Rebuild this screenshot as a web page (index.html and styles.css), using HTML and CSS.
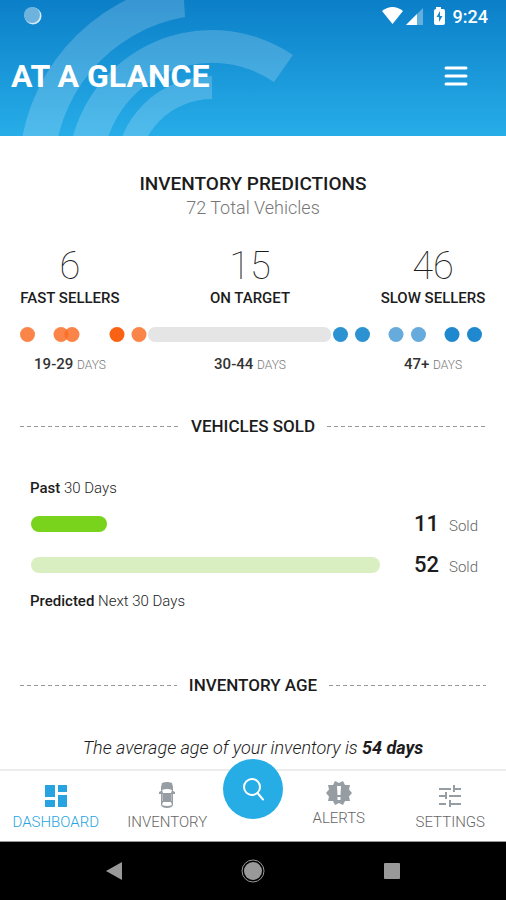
FILE: index.html
```html
<!DOCTYPE html>
<html lang="en">
<head>
<meta charset="utf-8">
<meta name="viewport" content="width=device-width, initial-scale=1">
<title>At a Glance</title>
<link rel="stylesheet" href="styles.css">
</head>
<body>
<header class="header">
  <svg class="header-art" viewBox="0 0 320 136" width="320" height="136" aria-hidden="true">
    <g fill="#fff" fill-opacity=".19">
      <path d="M19 173A193 193 0 0 1 183 -18L185 17A158 158 0 0 0 54 173Z"/>
      <path d="M68 173A144 144 0 0 1 293 55L274 82A110 110 0 0 0 102 173Z"/>
      <path d="M115 173A97 97 0 0 1 212 76V99A74 74 0 0 0 138 173Z"/>
    </g>
  </svg>
  <div class="status">
    <svg viewBox="0 0 18 18" width="18" height="18" aria-hidden="true"><circle cx="9" cy="9" r="8.500" fill="#d5ecf8"/><circle cx="8" cy="8" r="8" fill="#6db3de"/></svg>
    <div class="status-right">
      <svg viewBox="0 0 68 20" width="68" height="20" aria-hidden="true">
        <path d="M1 5Q11.500 -3 22 5L11.500 18Z" fill="#fff"/>
        <path d="M42 2V19H25Z" fill="#fff" fill-opacity=".35"/><path d="M36 8V19H25Z" fill="#fff"/>
        <path d="M55 1h5v2h2q2 0 2 2v12q0 2-2 2h-7q-2 0-2-2V5q0-2 2-2Z" fill="#fff"/><path d="M59 5L55.500 11H58V16L61.500 10H59Z" fill="#1888cb"/>
      </svg>
      <span>9:24</span>
    </div>
  </div>
  <div class="title-row">
    <h1>AT A GLANCE</h1>
    <button class="menu" type="button" aria-label="Menu"><svg viewBox="0 0 24 20" width="24" height="20"><path d="M2 2H22M2 10H22M2 18H22" stroke="#fff" stroke-width="3" stroke-linecap="round"/></svg></button>
  </div>
</header>

<main>
  <section class="predictions">
    <h2>INVENTORY PREDICTIONS</h2>
    <p class="total">72 Total Vehicles</p>
    <div class="groups">
      <div><div class="count">6</div><div class="group-name">FAST SELLERS</div></div>
      <div><div class="count">15</div><div class="group-name">ON TARGET</div></div>
      <div><div class="count">46</div><div class="group-name">SLOW SELLERS</div></div>
    </div>
    <svg class="track" viewBox="0 0 466 16" aria-hidden="true">
      <rect x="128" y="0" width="183" height="15" rx="7" fill="#e5e5e5"/>
      <g fill="#fa6a21" fill-opacity=".82"><circle cx="7.500" cy="7.500" r="7.500"/><circle cx="41" cy="7.500" r="7.500"/><circle cx="52" cy="7.500" r="7.500"/><circle cx="119" cy="7.500" r="7.500"/></g>
      <circle cx="97" cy="7.500" r="7.500" fill="#f96113"/>
      <g fill="#2d92d2"><circle cx="320.500" cy="7.500" r="7.500"/><circle cx="342.500" cy="7.500" r="7.500"/></g>
      <g fill="#66abdc"><circle cx="376" cy="7.500" r="7.500"/><circle cx="398.500" cy="7.500" r="7.500"/></g>
      <g fill="#2088ce"><circle cx="432" cy="7.500" r="7.500"/><circle cx="454.500" cy="7.500" r="7.500"/></g>
    </svg>
    <div class="groups ranges">
      <div><b>19-29</b> <span>DAYS</span></div>
      <div><b>30-44</b> <span>DAYS</span></div>
      <div><b>47+</b> <span>DAYS</span></div>
    </div>
  </section>

  <section class="sold">
    <h2 class="ruled">VEHICLES SOLD</h2>
    <div class="sold-body">
      <p class="caption"><b>Past</b> 30 Days</p>
      <div class="bar-row"><div class="bar-space"><div class="bar past" style="width:21.7%"></div></div><div class="value"><b>11</b><span>Sold</span></div></div>
      <div class="bar-row"><div class="bar-space"><div class="bar next" style="width:100%"></div></div><div class="value"><b>52</b><span>Sold</span></div></div>
      <p class="caption"><b>Predicted</b> Next 30 Days</p>
    </div>
  </section>

  <section class="age">
    <h2 class="ruled">INVENTORY AGE</h2>
    <p class="average">The average age of your inventory is <b>54 days</b></p>
  </section>
</main>

<footer class="bottom">
  <nav class="tabs">
    <a class="tab active" href="#dashboard"><svg viewBox="0 0 24 24" width="24" height="24"><path d="M1 1H11V13H1ZM1 16H11V23H1ZM14 1H23V8H14ZM14 11H23V23H14Z" fill="#27a3e2"/></svg>DASHBOARD</a>
    <a class="tab" href="#inventory"><svg viewBox="0 0 16 26" width="16" height="26"><path d="M3 1Q8 -1 13 1L14 5V9L16 10V12H14V23Q13 26 8 26Q3 26 2 23V12H0V10L2 9V5Z" fill="#969da3"/><path d="M3 8Q8 6 13 8L12 11H4ZM4 20H12L13 23Q8 25 3 23Z" fill="#fff"/><path d="M3.500 12V19M12.500 12V19" stroke="#b9bec2"/></svg>INVENTORY</a>
    <button class="search" type="button" aria-label="Search"><svg viewBox="0 0 26 26" width="26" height="26" fill="none" stroke="#fff" stroke-width="2" stroke-linecap="round"><circle cx="12" cy="11" r="8"/><path d="M17.500 17L23 23.500"/></svg></button>
    <a class="tab raised" href="#alerts"><svg viewBox="0 0 26 26" width="26" height="26"><path d="M9 1L13 3L17 1L19 5L24 5L23 9.500L26 13L23 16.500L24 21L19 21L17 25L13 23L9 25L7 21L2 21L3 16.500L0 13L3 9.500L2 5L7 5Z" fill="#969da3"/><path d="M11 6H15L14.500 15H11.500ZM11.500 17H14.500V20H11.500Z" fill="#fff"/></svg>ALERTS</a>
    <a class="tab" href="#settings"><svg viewBox="0 0 24 24" width="24" height="24"><path d="M1 5H13M16 5H23M16 1V8M1 12H7M8 8V15M11 12H23M1 20H8M11 20H23M12 16V23" fill="none" stroke="#969da3" stroke-width="2"/></svg>SETTINGS</a>
  </nav>
  <div class="system">
    <button type="button" aria-label="Back"><svg viewBox="0 0 24 24" width="24" height="24"><path d="M4 12L20 3V21Z" fill="#999"/></svg></button>
    <button type="button" aria-label="Home"><svg viewBox="0 0 24 24" width="24" height="24"><circle cx="12" cy="12" r="11" fill="none" stroke="#999"/><circle cx="12" cy="12" r="9" fill="#999"/></svg></button>
    <button type="button" aria-label="Recents"><svg viewBox="0 0 24 24" width="24" height="24"><rect x="4" y="4" width="16" height="16" rx="1" fill="#999"/></svg></button>
  </div>
</footer>
</body>
</html>
```
FILE: styles.css
```css
* { box-sizing: border-box; }
body {
  margin: 0;
  min-height: 100vh;
  display: flex;
  flex-direction: column;
  background: #fff;
  color: #1c1c1c;
  font-family: Roboto, "Liberation Sans", sans-serif;
}
h1, h2, p { margin: 0; }
svg { display: block; flex: none; }
button { border: 0; padding: 0; background: none; cursor: pointer; }

.header {
  position: relative;
  height: 136px;
  background: linear-gradient(#0b7fc8, #27ade8);
  color: #fff;
  overflow: hidden;
}
.header-art { position: absolute; left: 0; top: 0; }
.status, .title-row {
  position: relative;
  display: flex;
  align-items: center;
  justify-content: space-between;
}
.status { height: 32px; padding: 0 18px 0 24px; }
.status-right { display: flex; align-items: center; gap: 4px; font-size: 18px; font-weight: 500; }
.title-row { height: 88px; padding: 0 36px 0 11px; }
h1 { font-size: 32px; line-height: 40px; font-weight: 700; }
.menu { width: 28px; height: 28px; display: grid; place-items: center; }

.predictions { padding: 36px 20px 0; text-align: center; }
h2 { font-size: 19px; line-height: 24px; font-weight: 500; }
.total { font-size: 18px; line-height: 24px; font-weight: 300; color: #777; }
.groups { display: grid; grid-template-columns: 100px 1fr 106px; white-space: nowrap; }
.groups > div { display: flex; flex-direction: column; align-items: center; }
.predictions > .groups { margin-top: 24px; }
.count { font-size: 38px; line-height: 44px; font-weight: 100; }
.group-name { font-size: 15px; line-height: 20px; font-weight: 500; }
.track { width: 100%; margin-top: 19px; }
.groups.ranges > div { display: block; }
.predictions > .ranges { margin-top: 11px; font-size: 15px; line-height: 20px; color: #333; }
.ranges b { font-weight: 500; }
.ranges span { font-size: 12px; font-weight: 300; color: #777; }

.ruled { display: flex; align-items: center; gap: 12px; padding: 0 20px; white-space: nowrap; font-size: 17px; }
.ruled::before, .ruled::after {
  content: "";
  flex: 1;
  height: 1px;
  background: repeating-linear-gradient(90deg, #999 0 4px, transparent 4px 7px);
}
.sold { margin-top: 39px; }
.sold-body { padding: 40px 28px 0 30px; }
.caption { font-size: 15px; line-height: 20px; font-weight: 300; }
.caption b { font-weight: 500; }
.bar-row { display: flex; align-items: center; height: 41px; }
.caption + .bar-row { margin-top: 5px; }
.bar-space { flex: 1; padding-left: 1px; }
.bar { height: 16px; border-radius: 8px; }
.past { background: #79d21b; }
.next { background: #d9efc2; }
.value { width: 98px; display: flex; align-items: baseline; justify-content: flex-end; gap: 10px; }
.value b { font-size: 22px; font-weight: 500; }
.value span { font-size: 15px; font-weight: 300; color: #666; }
.bar-row + .caption { margin-top: 6px; }

.age { margin-top: 62px; }
.average { margin-top: 39px; text-align: center; font-size: 18px; line-height: 24px; font-weight: 300; font-style: italic; }
.average b { font-weight: 700; }

.bottom { margin-top: auto; }
.tabs {
  display: grid;
  grid-template-columns: 1fr 1fr 60px 1fr 1fr;
  height: 73px;
  border-top: 2px solid #ececec;
  border-bottom: 1px solid #999;
  background: #fff;
}
.tab {
  display: flex;
  flex-direction: column;
  align-items: center;
  justify-content: flex-end;
  gap: 4px;
  padding-bottom: 9px;
  color: #666;
  font-size: 15px;
  line-height: 20px;
  font-weight: 300;
  text-decoration: none;
}
.tab.active { color: #27a3e2; }
.tab.raised { padding-bottom: 13px; gap: 2px; }
.search {
  width: 60px;
  height: 60px;
  margin-top: -12px;
  border-radius: 50%;
  background: #27ade6;
  display: grid;
  place-items: center;
}
.system {
  height: 58px;
  padding: 0 44px;
  display: flex;
  align-items: center;
  justify-content: space-around;
  background: #000;
}
```
